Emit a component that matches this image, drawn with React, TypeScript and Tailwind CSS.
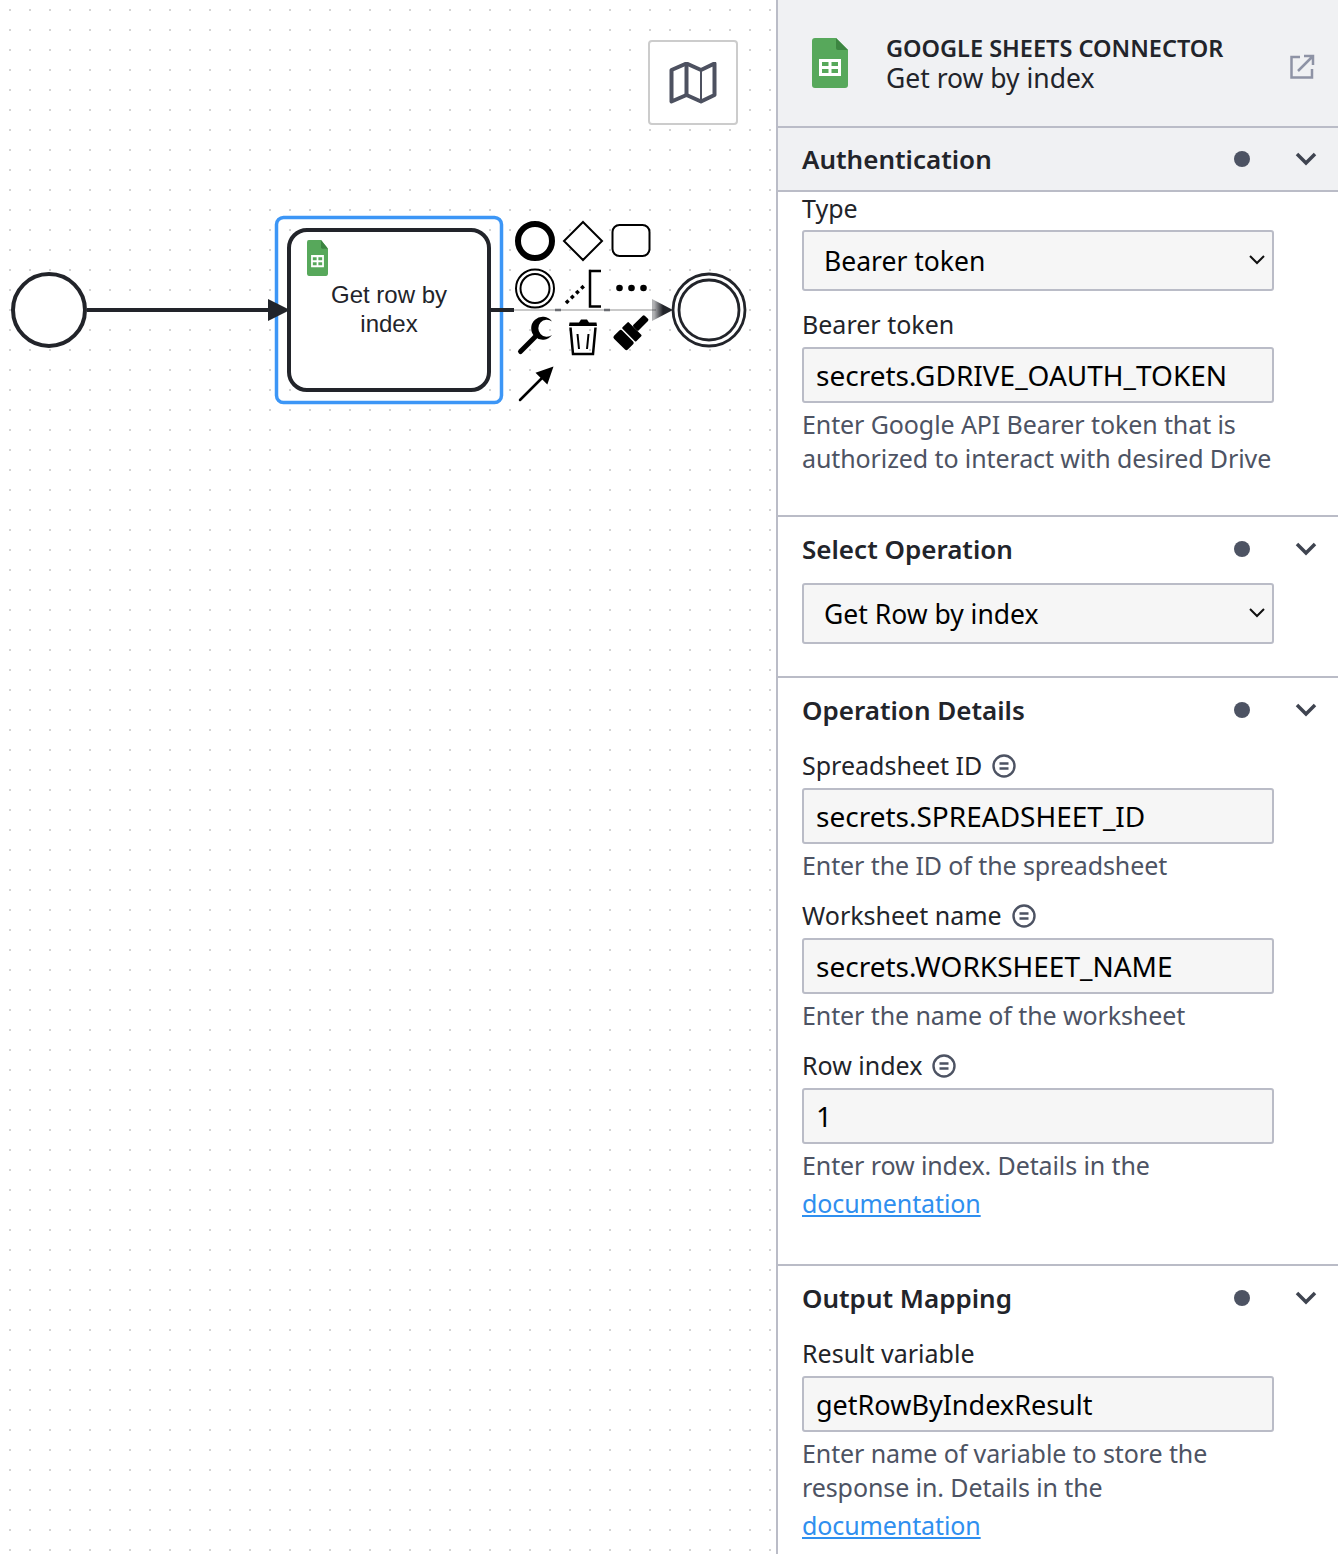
import type { ReactNode } from 'react';

const font = { fontFamily: '"Noto Sans", sans-serif' };

function SheetsIcon({ className }: { className: string }) {
    return (
        <svg viewBox="0 0 36 50" className={className}>
            <path d="M3 0H24L36 12V47a3 3 0 0 1-3 3H3a3 3 0 0 1-3-3V3a3 3 0 0 1 3-3Z" fill="#57a85b" />
            <path d="M24 0L36 12H26a2 2 0 0 1-2-2Z" fill="#3c8541" />
            <path d="M7 21H29V38H7Z M10 24V28H16.5V24Z M19.5 24V28H26V24Z M10 31V35H16.5V31Z M19.5 31V35H26V31Z" fill="#fff" fillRule="evenodd" />
        </svg>
    );
}

function Diagram() {
    return (
        <svg className="absolute top-0 left-0" width="776" height="460" viewBox="0 0 776 460">
            <defs>
                <linearGradient id="fade" x1="654" x2="672" y1="0" y2="0" gradientUnits="userSpaceOnUse">
                    <stop offset="0" stopColor="#22242a" stopOpacity="0.35" />
                    <stop offset="0.5" stopColor="#22242a" />
                </linearGradient>
            </defs>

            {/* start event */}
            <circle cx="49" cy="310" r="36" fill="#fff" stroke="#22242a" strokeWidth="4" />

            {/* selected task */}
            <rect x="276.500" y="217.500" width="225" height="185" rx="7" fill="none" stroke="#3c96f6" strokeWidth="3.500" />
            <rect x="289" y="230" width="200" height="160" rx="18" fill="#fff" stroke="#22242a" strokeWidth="4" />
            <g fill="#22242a" fontFamily='"Liberation Sans", Arial, sans-serif' fontSize="24" textAnchor="middle">
                <text x="389" y="303">Get row by</text>
                <text x="389" y="332">index</text>
            </g>
            <svg x="307" y="240" width="21" height="36" viewBox="0 0 36 50" preserveAspectRatio="none">
                <path d="M3 0H24L36 12V47a3 3 0 0 1-3 3H3a3 3 0 0 1-3-3V3a3 3 0 0 1 3-3Z" fill="#57a85b" />
                <path d="M24 0L36 12H26a2 2 0 0 1-2-2Z" fill="#3c8541" />
                <path d="M7 21H29V38H7Z M10 24V28H16.5V24Z M19.5 24V28H26V24Z M10 31V35H16.5V31Z M19.5 31V35H26V31Z" fill="#fff" fillRule="evenodd" />
            </svg>

            {/* incoming flow sits on top of the task edge */}
            <path d="M87 310H272" stroke="#22242a" strokeWidth="4" />
            <path d="M268 299L290 310L268 321Z" fill="#22242a" />

            {/* flow to end event, partly washed out by the context pad */}
            <path d="M491 310H514" stroke="#22242a" strokeWidth="4" />
            <path d="M514 310H656" stroke="#c9c9c9" strokeWidth="2" />
            <path d="M555 310H561M604 310H610" stroke="#6a6c72" strokeWidth="2.500" />
            <path d="M652 299L673 310L652 321Z" fill="url(#fade)" />
            <circle cx="709" cy="310" r="36" fill="#fff" stroke="#22242a" strokeWidth="2.800" />
            <circle cx="709" cy="310" r="30" fill="#fff" stroke="#22242a" strokeWidth="2.800" />

            {/* context pad */}
            <circle cx="535" cy="241" r="17" fill="#fff" stroke="#000" strokeWidth="6" />
            <path d="M583 222L602 241L583 260L564 241Z" fill="#fff" stroke="#000" strokeWidth="2" />
            <rect x="612.500" y="225" width="37" height="31" rx="7" fill="#fff" stroke="#000" strokeWidth="2" />
            <circle cx="535" cy="288.500" r="19" fill="#fff" stroke="#000" strokeWidth="2" />
            <circle cx="535" cy="288.500" r="14.500" fill="#fff" stroke="#000" strokeWidth="2" />
            <path d="M566 303L586 284" stroke="#000" strokeWidth="3.500" strokeDasharray="3.500 3.500" />
            <path d="M601 271H590V306.500H601" fill="none" stroke="#000" strokeWidth="2.500" />
            <circle cx="619.500" cy="288" r="3.300" />
            <circle cx="631.500" cy="288" r="3.300" />
            <circle cx="643.500" cy="288" r="3.300" />

            {/* wrench */}
            <path d="M520.500 351.500L535 337" stroke="#000" strokeWidth="5" strokeLinecap="round" />
            <path d="M552 321.500A11.500 11.500 0 1 0 552 335A8.500 8.500 0 1 1 552 321.500Z" />

            {/* trash */}
            <path d="M579 322.500L581 319.500H587L589 322.500H596.500L597 326H569L569.500 322.500Z" />
            <path d="M570.500 327.500L573 354H593L595.500 327.500" fill="none" stroke="#000" strokeWidth="2.500" />
            <path d="M577.500 334L579 349M588.500 334L587 349" stroke="#000" strokeWidth="2" />

            {/* paint brush */}
            <g transform="rotate(45 631 333)">
                <rect x="627" y="311" width="7.500" height="16" rx="1.500" />
                <rect x="621" y="327" width="19.500" height="9" rx="1" />
                <rect x="621" y="337.500" width="19.500" height="11.500" rx="2" />
            </g>

            {/* connect arrow */}
            <path d="M520 400L544 376" stroke="#000" strokeWidth="2.500" strokeLinecap="round" />
            <path d="M553.500 366.500L535.500 372.700L547.300 384.500Z" />
        </svg>
    );
}

function Section({ title, tint, border = true, children }: { title: string; tint?: boolean; border?: boolean; children?: ReactNode }) {
    return (
        <section className={border ? 'border-b-2 border-[#babcc7]' : ''}>
            <div className={`flex items-center pr-[21px] pl-[24px] ${tint ? 'h-[64px] border-b-2 border-[#babcc7] bg-[#f0f1f3]' : 'h-[62px] pt-[2px]'}`}>
                <h2 className="flex-1 text-[26px] font-semibold text-[#22242a]">{title}</h2>
                <span className="mr-[45px] h-4 w-4 rounded-full bg-[#4d5363]" />
                <svg width="22" height="14" viewBox="0 0 22 14" fill="none" stroke="#3f4450" strokeWidth="3.500">
                    <path d="M2 2L11 11L20 2" />
                </svg>
            </div>
            {children}
        </section>
    );
}

function Label({ text, feel, className = '' }: { text: string; feel?: boolean; className?: string }) {
    return (
        <div className={`flex h-[34px] items-center text-[25px] text-[#22242a] ${className}`}>
            {text}
            {feel && (
                <svg className="ml-[10px]" width="24" height="24" viewBox="0 0 24 24" fill="none" stroke="#4d5363" strokeWidth="2.400">
                    <circle cx="12" cy="12" r="10.500" />
                    <path d="M7.500 9.500H16.500M7.500 14.500H16.500" />
                </svg>
            )}
        </div>
    );
}

function Field({ value, className = 'text-[28px]' }: { value: string; className?: string }) {
    return (
        <input
            readOnly
            value={value}
            className={`mt-[5px] block h-[56px] w-[472px] rounded-[3px] border-2 border-[#babcc7] bg-[#f6f6f6] px-[12px] text-black outline-none ${className}`}
        />
    );
}

function Picker({ value }: { value: string }) {
    return (
        <div className="relative flex h-[61px] w-[472px] items-center rounded-[3px] border-2 border-[#babcc7] bg-[#f6f6f6] pt-[2px] pl-[20px] text-[26.500px] text-black">
            {value}
            <svg className="absolute top-[22px] right-[6px]" width="18" height="12" viewBox="0 0 18 12" fill="none" stroke="#111" strokeWidth="2">
                <path d="M2 2L9 9L16 2" />
            </svg>
        </div>
    );
}

function Help({ children }: { children: ReactNode }) {
    return <p className="mt-1 text-[25px] leading-[34px] tracking-[-0.1px] text-[#4d5363]">{children}</p>;
}

function DocLink() {
    return <a href="#" className="mt-1 block leading-[34px] text-[#2f8fef] underline">documentation</a>;
}

export default function App() {
    return (
        <div className="flex h-[1554px] w-[1338px] overflow-hidden bg-white" style={font}>
            {/* canvas */}
            <div className="relative w-[776px] shrink-0 bg-[radial-gradient(circle,#d4d4d4_1px,transparent_1.3px)] bg-[size:20px_20px]">
                <Diagram />
                <button className="absolute top-[40px] left-[648px] flex h-[85px] w-[90px] items-center justify-center rounded-[4px] border-2 border-[#cccccc] bg-white">
                    <svg width="48" height="42" viewBox="0 0 48 42" fill="none" stroke="#4d5160" strokeWidth="4" strokeLinejoin="round">
                        <path d="M2.500 8L17.500 1.500L32 8L45.500 1.500V33L32 39.500L17.500 33L2.500 39.500Z" />
                        <path d="M17.500 1.500V33" />
                        <path d="M32 8V39.500" strokeWidth="2" />
                    </svg>
                </button>
            </div>

            {/* properties panel */}
            <aside className="w-[562px] shrink-0 border-l-2 border-[#babcc7]">
                <header className="flex h-[128px] items-center border-b-2 border-[#babcc7] bg-[#f0f1f3] pr-[23px] pl-[34px]">
                    <SheetsIcon className="h-[50px] w-[36px] shrink-0" />
                    <div className="ml-[38px] flex-1">
                        <div className="text-[23.500px] leading-[30px] font-semibold text-[#22242a]">GOOGLE SHEETS CONNECTOR</div>
                        <div className="text-[26.500px] leading-[30px] text-[#22242a]">Get row by index</div>
                    </div>
                    <svg className="mt-2" width="26" height="26" viewBox="0 0 26 26" fill="none" stroke="#8e93a5" strokeWidth="2.500">
                        <path d="M11 3H2.500V23.500H23V15" />
                        <path d="M9 17L24 2M15 2H24V11" />
                    </svg>
                </header>

                <Section title="Authentication" tint>
                    <div className="px-[24px] pb-[40px]">
                        <Label text="Type" className="mb-1" />
                        <Picker value="Bearer token" />
                        <Label text="Bearer token" className="mt-[17px]" />
                        <Field value="secrets.GDRIVE_OAUTH_TOKEN" />
                        <Help>
                            Enter Google API Bearer token that is
                            <br />
                            authorized to interact with desired Drive
                        </Help>
                    </div>
                </Section>

                <Section title="Select Operation">
                    <div className="px-[24px] pt-1 pb-[32px]">
                        <Picker value="Get Row by index" />
                    </div>
                </Section>

                <Section title="Operation Details">
                    <div className="px-[24px] pt-[9px] pb-[44px]">
                        <Label text="Spreadsheet ID" feel />
                        <Field value="secrets.SPREADSHEET_ID" />
                        <Help>Enter the ID of the spreadsheet</Help>
                        <Label text="Worksheet name" feel className="mt-[17px]" />
                        <Field value="secrets.WORKSHEET_NAME" />
                        <Help>Enter the name of the worksheet</Help>
                        <Label text="Row index" feel className="mt-[17px]" />
                        <Field value="1" />
                        <Help>
                            Enter row index. Details in the
                            <DocLink />
                        </Help>
                    </div>
                </Section>

                <Section title="Output Mapping" border={false}>
                    <div className="px-[24px] pt-[9px]">
                        <Label text="Result variable" />
                        <Field value="getRowByIndexResult" className="text-[27px]" />
                        <Help>
                            Enter name of variable to store the
                            <br />
                            response in. Details in the
                            <DocLink />
                        </Help>
                    </div>
                </Section>
            </aside>
        </div>
    );
}
